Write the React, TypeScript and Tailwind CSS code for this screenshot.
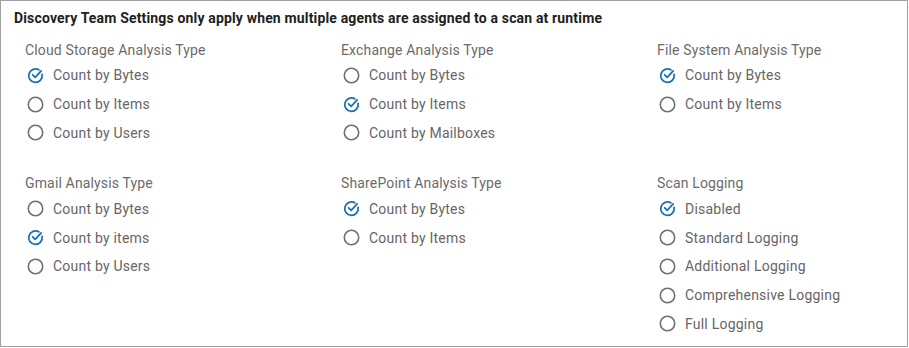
import React from "react";

type Item = { label: string; checked?: boolean };
type Section = { title: string; items: Item[] };

const row1: Section[] = [
  { title: "Cloud Storage Analysis Type", items: [{ label: "Count by Bytes", checked: true }, { label: "Count by Items" }, { label: "Count by Users" }] },
  { title: "Exchange Analysis Type", items: [{ label: "Count by Bytes" }, { label: "Count by Items", checked: true }, { label: "Count by Mailboxes" }] },
  { title: "File System Analysis Type", items: [{ label: "Count by Bytes", checked: true }, { label: "Count by Items" }] },
];
const row2: Section[] = [
  { title: "Gmail Analysis Type", items: [{ label: "Count by Bytes" }, { label: "Count by items", checked: true }, { label: "Count by Users" }] },
  { title: "SharePoint Analysis Type", items: [{ label: "Count by Bytes", checked: true }, { label: "Count by Items" }] },
  { title: "Scan Logging", items: [{ label: "Disabled", checked: true }, { label: "Standard Logging" }, { label: "Additional Logging" }, { label: "Comprehensive Logging" }, { label: "Full Logging" }] },
];

function Checked() {
  return (
    <svg width="17" height="17" viewBox="0 0 24 24" fill="none" stroke="#1a6fb5" strokeWidth="2.5" strokeLinecap="round" strokeLinejoin="round">
      <path d="M21.3 10.5A9.5 9.5 0 1 1 16.8 4" />
      <path d="m8 11 3.5 3.5L20 5.5" />
    </svg>
  );
}

function Unchecked() {
  return (
    <svg width="17" height="17" viewBox="0 0 17 17" fill="none">
      <circle cx="8.5" cy="8.5" r="7.2" stroke="#707070" strokeWidth="1.6" />
    </svg>
  );
}

function SectionBlock({ s }: { s: Section }) {
  return (
    <div className="flex flex-col">
      <div className="text-[14px] leading-5 tracking-[0.15px] text-[#6b6b6b] mb-[1px]">{s.title}</div>
      {s.items.map((it) => (
        <div key={it.label} className="flex items-center h-[28.8px]">
          <div className="w-[28px] pl-[2px] flex items-center">{it.checked ? <Checked /> : <Unchecked />}</div>
          <span className="text-[14px] leading-5 tracking-[0.22px] text-[#666666]">{it.label}</span>
        </div>
      ))}
    </div>
  );
}

export default function App() {
  return (
    <div className="w-[908px] h-[347px] border border-[#a0a0a0] bg-white font-['Roboto',sans-serif]">
      <div className="pl-[13px] pt-[7px] text-[14px] font-bold leading-5 tracking-[0.16px] text-[#212121]">
        Discovery Team Settings only apply when multiple agents are assigned to a scan at runtime
      </div>
      <div className="grid grid-cols-[316px_316px_276px] pl-[24px] mt-[12px] gap-y-[26px]">
        {row1.map((s) => (
          <SectionBlock key={s.title} s={s} />
        ))}
        {row2.map((s) => (
          <SectionBlock key={s.title} s={s} />
        ))}
      </div>
    </div>
  );
}
